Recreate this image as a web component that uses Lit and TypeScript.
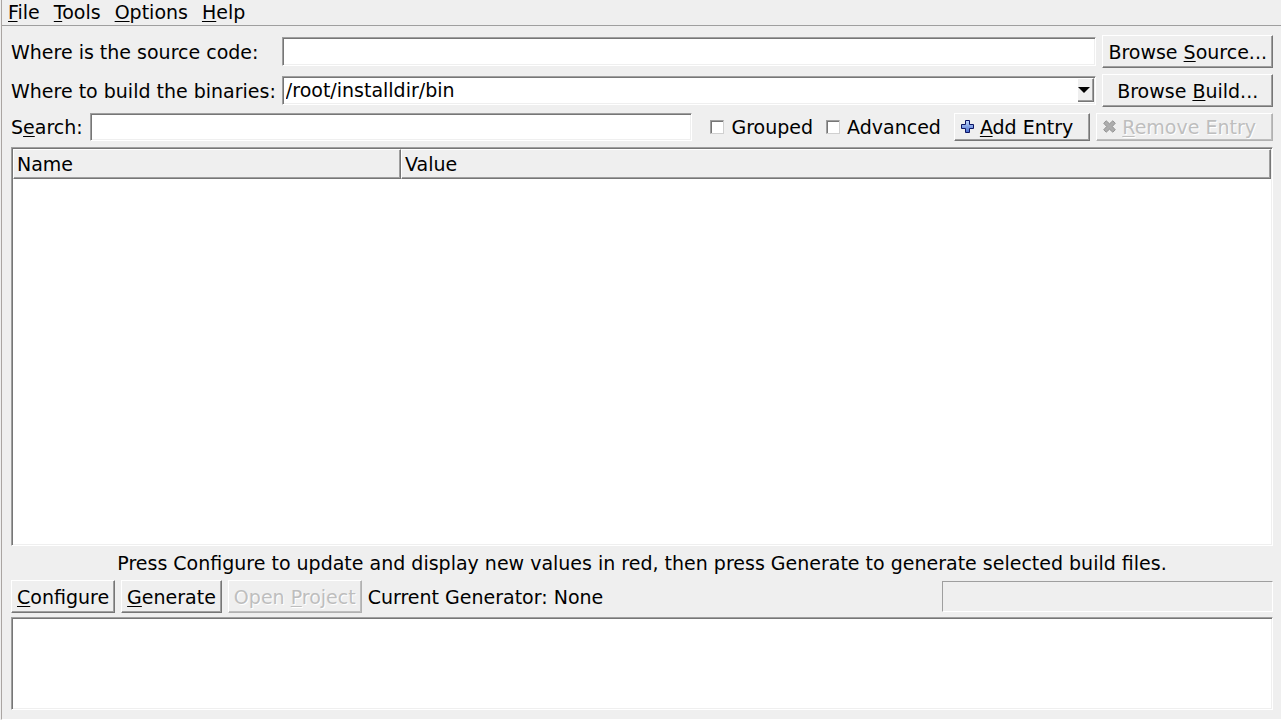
import { LitElement, html, css, svg } from "lit";
import { customElement } from "lit/decorators.js";

const plusIcon = svg`<svg class="icon" viewBox="0 0 14 14" width="14" height="14" aria-hidden="true">
  <defs><linearGradient id="blue" x1="0" y1="0" x2="0" y2="1"><stop offset="0" stop-color="#c4dcff"/><stop offset="1" stop-color="#4468cc"/></linearGradient></defs>
  <path d="M5.500 .5h4v4h4v4h-4v4h-4v-4h-4v-4h4z" fill="url(#blue)" stroke="#0c1464"/>
</svg>`;

const crossIcon = svg`<svg class="icon" viewBox="0 0 14 14" width="14" height="14" aria-hidden="true">
  <path d="M4.200 .8L7.500 3.800 10.800 .8 13.300 3.200 10.300 6.500l3 3.300-2.500 2.400-3.300-3-3.300 3L1.700 9.800l3-3.300-3-3.300z" fill="#adadad" stroke="#949494" stroke-linejoin="round"/>
</svg>`;

@customElement("app-root")
export class AppRoot extends LitElement {
  static styles = css`
    :host {
      display: block;
      font: 19px/22px "DejaVu Sans", sans-serif;
      color: #000;
      background: #efefef;
    }
    * { box-sizing: border-box; }
    button, input, select, textarea {
      font: inherit;
      color: inherit;
      margin: 0;
      border-radius: 0;
      outline: none;
    }
    .window {
      display: flex;
      flex-direction: column;
      min-height: 100vh;
      margin-left: 1px;
      border-left: 1px solid #aaa5a2;
      border-bottom: 1px solid #fff;
    }
    .menu {
      display: flex;
      gap: 14px;
      padding: 1px 6px 2px;
      border-bottom: 1px solid #9f9f9f;
    }
    .menu button {
      border: 0;
      padding: 0;
      background: none;
    }
    .key {
      text-decoration: underline;
      text-decoration-thickness: 1px;
      text-underline-offset: 2px;
      text-decoration-skip-ink: none;
    }
    .content {
      flex: 1;
      display: flex;
      flex-direction: column;
      gap: 6px;
      padding: 9px 8px 9px 9px;
    }
    .paths {
      display: grid;
      grid-template-columns: auto 1fr auto;
      gap: 6px;
      align-items: center;
    }
    .sunken {
      border: 1px solid;
      border-color: #9f9f9f #fff #fff #9f9f9f;
      box-shadow: inset 1px 1px #767676, inset -1px -1px #efefef;
      background: #fff;
    }
    .field {
      width: 100%;
      min-width: 0;
      height: 28px;
      padding: 0 4px;
    }
    .paths .sunken { height: 29px; }
    .combo {
      display: grid;
      align-items: center;
      padding: 0 1px 2px;
    }
    .combo select {
      grid-area: 1 / 1;
      appearance: none;
      border: 0;
      background: none;
      padding: 0 20px 0 2px;
    }
    .arrow {
      grid-area: 1 / 1;
      justify-self: end;
      display: grid;
      align-items: center;
      justify-items: start;
      width: 16px;
      height: 24px;
      border-left-width: 0;
      pointer-events: none;
    }
    .raised {
      border: 1px solid;
      border-color: #fff #767676 #767676 #fff;
      box-shadow: inset -1px -1px #9f9f9f;
      background: #efefef;
    }
    .combo .arrow { border-left: 0; }
    .push {
      height: 33px;
      padding: 0 5px;
      white-space: nowrap;
    }
    .push:disabled {
      color: #bebebe;
      text-shadow: 1px 1px #fff;
      border-color: #fff #b1b1b1 #b1b1b1 #fff;
      box-shadow: inset -1px -1px #bebebe;
    }
    .tool {
      display: flex;
      align-items: center;
      gap: 6px;
      height: 28px;
      padding: 0 16px 0 5px;
    }
    .icon { display: block; flex: none; }
    .search {
      display: flex;
      align-items: center;
      gap: 7px;
    }
    .search .field { flex: 1; width: auto; }
    .tools {
      display: flex;
      gap: 6px;
    }
    .checks {
      display: flex;
      gap: 13px;
      padding: 0 6px 0 11px;
    }
    .check {
      display: flex;
      align-items: center;
      gap: 7px;
    }
    .check input {
      appearance: none;
      width: 14px;
      height: 14px;
      border: 1px solid;
      border-color: #9f9f9f #d0d0d0 #d0d0d0 #9f9f9f;
      box-shadow: inset 1px 1px #767676;
      background: #fff;
    }
    .check input:checked { background: #767676; }
    .cache {
      flex: 1;
      padding: 1px 1px 0;
    }
    .cache table {
      width: 100%;
      table-layout: fixed;
      border-collapse: separate;
      border-spacing: 0;
    }
    .cache th {
      height: 30px;
      padding: 0 4px 0 3px;
      font-weight: normal;
      text-align: left;
    }
    .cache .name { width: 388px; }
    .hint {
      margin: 0;
      padding: 1px 0 0;
      text-align: center;
      line-height: 21px;
    }
    .actions {
      display: flex;
      align-items: center;
      gap: 6px;
    }
    .progress {
      width: 331px;
      height: 31px;
      margin-left: auto;
      border: 1px solid;
      border-color: #9f9f9f #fff #fff #9f9f9f;
    }
    .output {
      display: block;
      width: 100%;
      height: 93px;
      margin-top: -2px;
      padding: 4px;
      resize: none;
    }
  `;

  render() {
    return html`
      <div class="window">
        <nav class="menu">
          <button><span class="key">F</span>ile</button>
          <button><span class="key">T</span>ools</button>
          <button><span class="key">O</span>ptions</button>
          <button><span class="key">H</span>elp</button>
        </nav>
        <main class="content">
          <div class="paths">
            <label for="source">Where is the source code:</label>
            <input id="source" class="field sunken" type="text" />
            <button class="push raised">Browse <span class="key">S</span>ource...</button>
            <label for="build">Where to build the binaries:</label>
            <div class="combo sunken">
              <select id="build"><option>/root/installdir/bin</option></select>
              <span class="arrow raised">
                <svg viewBox="0 0 12 6" width="12" height="6" aria-hidden="true"><path d="M0 0h12L6 6z" /></svg>
              </span>
            </div>
            <button class="push raised">Browse <span class="key">B</span>uild...</button>
          </div>
          <div class="search">
            <label for="search">S<span class="key">e</span>arch:</label>
            <input id="search" class="field sunken" type="text" />
            <div class="checks">
              <label class="check"><input type="checkbox" />Grouped</label>
              <label class="check"><input type="checkbox" />Advanced</label>
            </div>
            <div class="tools">
              <button class="push tool raised">${plusIcon}<span><span class="key">A</span>dd Entry</span></button>
              <button class="push tool raised" disabled>${crossIcon}<span><span class="key">R</span>emove Entry</span></button>
            </div>
          </div>
          <div class="cache sunken">
            <table>
              <thead>
                <tr><th class="name raised">Name</th><th class="raised">Value</th></tr>
              </thead>
              <tbody></tbody>
            </table>
          </div>
          <p class="hint">Press Configure to update and display new values in red, then press Generate to generate selected build files.</p>
          <div class="actions">
            <button class="push raised"><span class="key">C</span>onfigure</button>
            <button class="push raised"><span class="key">G</span>enerate</button>
            <button class="push raised" disabled>Open <span class="key">P</span>roject</button>
            <span>Current Generator: None</span>
            <div class="progress" role="progressbar" aria-label="Progress"></div>
          </div>
          <textarea class="output sunken" aria-label="Output" readonly></textarea>
        </main>
      </div>
    `;
  }
}
